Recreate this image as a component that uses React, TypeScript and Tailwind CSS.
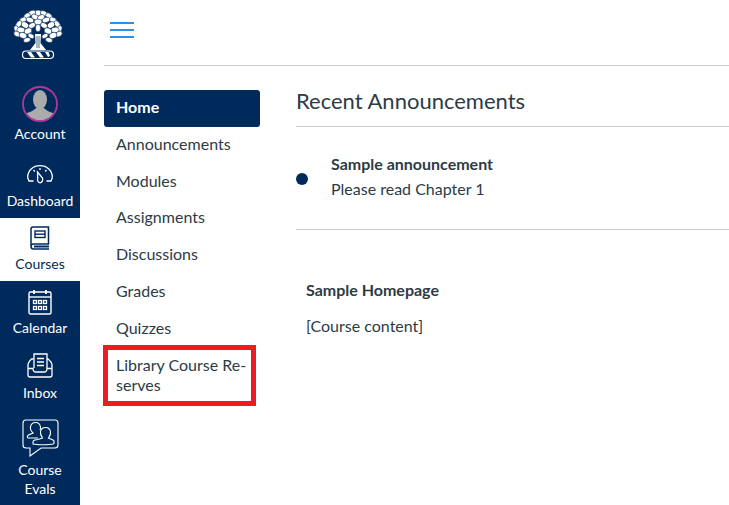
import React from 'react';

const AccountIcon = () => (
  <svg width="36" height="36" viewBox="0 0 36 36">
    <defs>
      <clipPath id="avatarClip">
        <circle cx="18" cy="18" r="16.5" />
      </clipPath>
    </defs>
    <g clipPath="url(#avatarClip)" fill="#ababab">
      <ellipse cx="18" cy="13.5" rx="7" ry="9.5" />
      <path d="M2 36 V29 C5 26 11 26 14 22 L22 22 C25 26 31 26 34 29 V36 Z" />
    </g>
    <circle cx="18" cy="18" r="17" fill="none" stroke="#b0379a" strokeWidth="1.8" />
  </svg>
);

// crown clumps: x, y, rx, ry, angle
const leaves: [number, number, number, number, number][] = [
  [25, 3, 3.8, 2.9, 0], [19, 3, 3.8, 2.6, -20], [31, 3.5, 3.8, 2.6, 25], [14, 6, 3.8, 2.6, -40], [36, 6, 3.8, 2.6, 40],
  [22, 7, 3.8, 2.6, 30], [28, 7.5, 3.8, 2.6, -30], [10, 10, 3.8, 2.6, -30], [40, 10, 3.8, 2.6, 30], [17, 10, 4, 2.6, 20],
  [33, 10, 4, 2.6, -20], [25, 12, 4, 2.9, 0], [6, 14, 3.8, 2.6, -50], [44, 14, 3.8, 2.6, 50], [12, 15, 4, 2.9, 30],
  [38, 15, 4, 2.9, -30], [19, 15.5, 3.8, 2.6, -30], [31, 15.5, 3.8, 2.6, 30], [3.5, 19, 3.5, 2.4, 70], [46.5, 19, 3.5, 2.4, -70],
  [8, 20, 4, 2.9, 10], [42, 20, 4, 2.9, -10], [15, 21, 4, 2.9, -20], [35, 21, 4, 2.9, 20], [25, 18, 3.8, 2.6, 90],
  [4, 24, 3.4, 2.5, 30], [46, 24, 3.4, 2.5, -30], [10, 25.5, 4, 2.9, 20], [40, 25.5, 4, 2.9, -20], [18, 26, 3.4, 2.2, 30],
  [32, 26, 3.4, 2.2, -30], [14, 30, 3.6, 2.4, -15], [36, 30, 3.6, 2.4, 15],
];

const TreeLogo = () => (
  <svg width="50" height="50" viewBox="0 0 50 50" className="mr-[4px]">
    <g fill="#fff" stroke="#002a5c" strokeWidth="0.6">
      {leaves.map(([x, y, rx, ry, a], i) => (
        <ellipse key={i} cx={x} cy={y} rx={rx} ry={ry} transform={`rotate(${a} ${x} ${y})`} />
      ))}
    </g>
    <path d="M22 24 L28 24 L27.5 33 L33 40 L17 40 L22.5 33 Z" fill="#fff" />
    <g stroke="#002a5c" strokeWidth="0.7" fill="none">
      <path d="M24 26 V38 M26 26 V38" />
    </g>
    <rect x="9.5" y="41" width="31" height="7.5" rx="3.5" fill="#002a5c" stroke="#fff" strokeWidth="1.2" />
    <path d="M14 42 L18 47.5 L22 47.5 L18 42 Z M23 42 L27 47.5 L31 47.5 L27 42 Z M32 42 L35 47 L37 46 L35.5 42 Z" fill="#fff" />
  </svg>
);

const DashboardIcon = () => (
  <svg width="26" height="19" viewBox="0 0 26 19" fill="none" stroke="currentColor" strokeWidth="1.3">
    <path d="M6.5 16 H2 C1.2 14.5 0.7 13 0.7 12 C0.7 5.5 6 0.7 13 0.7 C20 0.7 25.3 5.5 25.3 12 C25.3 13 24.8 14.5 24 16 H19.5" />
    <path d="M10.5 7 L15.5 13 C16.2 15.5 14.8 17.8 13 17.8 C11.2 17.8 10 15.5 10.7 13 Z" />
    <path d="M13 3 V5 M6.5 5 L7.8 6.5 M19.5 5 L18.2 6.5" />
  </svg>
);

const CoursesIcon = () => (
  <svg width="20" height="25" viewBox="0 0 20 25" fill="none" stroke="currentColor" strokeWidth="1.5">
    <path d="M1 20 V3 C1 1.8 1.8 1 3 1 H18.5 V18 H3.5 C2 18 1 19 1 20.5 C1 22 2 23 3.5 23 H19" />
    <rect x="5" y="5" width="10" height="6.5" strokeWidth="1.4" />
    <path d="M5 8.2 H15" strokeWidth="1.4" />
    <path d="M4 20.5 H19" strokeWidth="2" />
  </svg>
);

const CalendarIcon = () => (
  <svg width="24" height="26" viewBox="0 0 24 26" fill="none" stroke="currentColor" strokeWidth="1.4">
    <rect x="1" y="3" width="22" height="22" rx="1.5" />
    <path d="M1 8 H23" />
    <path d="M6 1 V5 M18 1 V5" strokeWidth="1.8" />
    <g fill="none" strokeWidth="1.3">
      <rect x="5.5" y="11.5" width="3" height="3" />
      <rect x="10.5" y="11.5" width="3" height="3" />
      <rect x="15.5" y="11.5" width="3" height="3" />
      <rect x="5.5" y="17.5" width="3" height="3" />
      <rect x="10.5" y="17.5" width="3" height="3" />
      <rect x="15.5" y="17.5" width="3" height="3" />
    </g>
  </svg>
);

const InboxIcon = () => (
  <svg width="26" height="25" viewBox="0 0 26 25" fill="none" stroke="currentColor" strokeWidth="1.3">
    <path d="M7 15 V1 H20 V15" />
    <path d="M10 5.5 H17 M10 9 H17 M10 12.5 H17" strokeWidth="1.5" />
    <path d="M6.5 6 H4.5 C2.5 8 1 10 1 12 V22 C1 23.2 1.8 24 3 24 H23 C24.2 24 25 23.2 25 22 V12 C25 10 23.5 8 21 6 H20" />
    <path d="M1 15.5 H6 C6 17.5 7 19 9 19 H17 C19 19 20 17.5 20 15.5 H25" />
  </svg>
);

const EvalsIcon = () => (
  <svg width="37" height="38" viewBox="0 0 37 38" fill="none" stroke="currentColor" strokeWidth="1.1">
    <path d="M4 1 H33 C34.7 1 36 2.3 36 4 V26 C36 27.7 34.7 29 33 29 H19 L8 37 V29 H4 C2.3 29 1 27.7 1 26 V4 C1 2.3 2.3 1 4 1 Z" />
    <path d="M16 19 H6.5 C5 19 5 17 6.5 16 L11 14 C9 12 8 10 8.5 8 C9 5 11 3.5 13.5 3.5 C16 3.5 18 5 18.5 8 C18.7 9 18.5 10 18 11" />
    <path d="M11 25 C15 26 27 26 31 25 C32.5 24.5 32.5 22 31 21 L26.5 19 C28 17 29 15 28.5 12.5 C28 10 26 8.5 23.5 8.5 C21 8.5 19 10 18.5 12.5 C18 15 19 17 20.5 19 L16 20.5 C14 20.5 11 21 11 23 Z" />
  </svg>
);

type GlobalItem = {
  label: string;
  icon: React.ReactNode;
  className: string;
  active?: boolean;
};

const globalNav: GlobalItem[] = [
  { label: 'Dashboard', icon: <DashboardIcon />, className: 'h-[63px] pt-[10px] gap-[8px]' },
  { label: 'Courses', icon: <CoursesIcon />, className: 'h-[63px] pt-[8px] gap-[4px]', active: true },
  { label: 'Calendar', icon: <CalendarIcon />, className: 'h-[65px] pt-[8px] gap-[4px]' },
  { label: 'Inbox', icon: <InboxIcon />, className: 'h-[60px] pt-[7px] gap-[6px]' },
];

const courseNav = ['Announcements', 'Modules', 'Assignments', 'Discussions', 'Grades', 'Quizzes'];

export default function App() {
  return (
    <div className="relative flex h-[505px] w-[729px] overflow-hidden bg-white font-['Lato',sans-serif] text-[#2d3b45]">
      <aside className="flex w-[80px] shrink-0 flex-col items-center bg-[#002a5c] text-[14px] leading-[18px] text-white">
        <div className="flex h-[86px] w-full shrink-0 justify-center pt-[10px]">
          <TreeLogo />
        </div>
        <div className="flex h-[59px] w-full shrink-0 flex-col items-center">
          <AccountIcon />
          <span className="mt-[3px]">Account</span>
        </div>
        <div className="h-[10px] w-full shrink-0" />
        {globalNav.map((item) => (
          <div
            key={item.label}
            className={`flex w-full shrink-0 flex-col items-center ${item.className} ${
              item.active ? 'bg-white text-[#002a5c]' : ''
            }`}
          >
            {item.icon}
            <span>{item.label}</span>
          </div>
        ))}
        <div className="flex w-full shrink-0 flex-col items-center pt-[13px]">
          <EvalsIcon />
          <span className="mt-[3px] text-center leading-[19px]">
            Course
            <br />
            Evals
          </span>
        </div>
      </aside>

      <main className="flex-1 pl-[24px]">
        <header className="flex h-[66px] items-center border-b border-[#c7cdd1] pl-[6px]">
          <div className="mb-[5px] flex w-[24px] flex-col gap-[5px]">
            <span className="h-[2px] bg-[#2b93e6]" />
            <span className="h-[2px] bg-[#2b93e6]" />
            <span className="h-[2px] bg-[#2b93e6]" />
          </div>
        </header>

        <div className="flex pt-[24px]">
          <nav className="w-[156px] shrink-0 text-[16px]">
            <div className="flex h-[37px] items-center rounded-[3px] bg-[#002a5c] pb-[3px] pl-[12px] font-bold text-white">
              Home
            </div>
            {courseNav.map((label) => (
              <div key={label} className="flex h-[36.8px] items-center pb-[3px] pl-[12px]">
                {label}
              </div>
            ))}
            <div className="pl-[12px] pt-[7px] leading-[20px]">
              Library Course Re-
              <br />
              serves
            </div>
          </nav>

          <section className="ml-[36px] flex-1 text-[16px]">
            <h2 className="h-[37px] border-b border-[#c7cdd1] text-[22px] leading-[22px]">
              Recent Announcements
            </h2>
            <div className="flex h-[103px] items-start border-b border-[#c7cdd1] pt-[24px]">
              <span className="mt-[22px] size-[12px] rounded-full bg-[#002a5c]" />
              <div className="ml-[23px] leading-[25px]">
                <div className="font-bold">Sample announcement</div>
                <div>Please read Chapter 1</div>
              </div>
            </div>
            <div className="pl-[10px] pt-[50px]">
              <div className="font-bold leading-[20px]">Sample Homepage</div>
              <div className="mt-[16px] leading-[20px]">[Course content]</div>
            </div>
          </section>
        </div>
      </main>

      <div className="absolute left-[103px] top-[345px] h-[61px] w-[153px] border-[5px] border-[#ed1c24]" />
    </div>
  );
}
